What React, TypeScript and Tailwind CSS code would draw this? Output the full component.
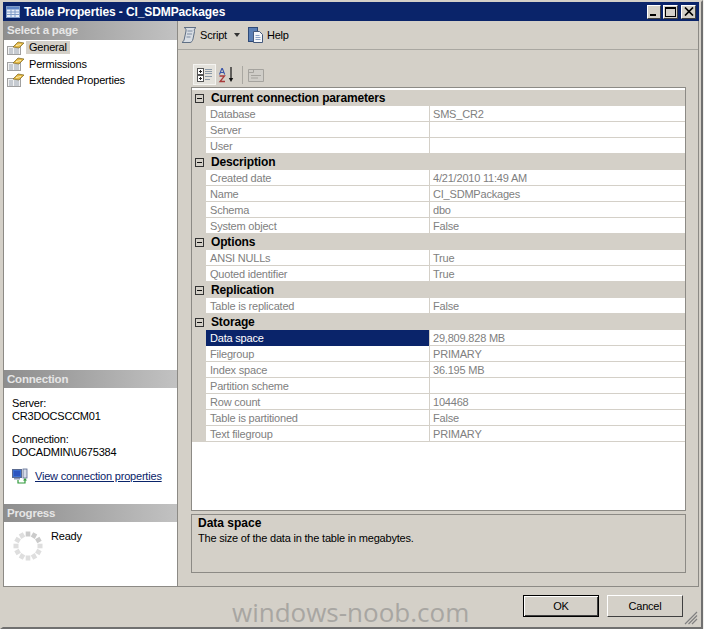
const font = "font-['Liberation_Sans',Arial,sans-serif]";
const body = "text-[11px] tracking-[-0.2px]";

type Row = { name: string; value: string; selected?: boolean };
type Section = { title: string; rows: Row[] };

const sections: Section[] = [
  {
    title: "Current connection parameters",
    rows: [
      { name: "Database", value: "SMS_CR2" },
      { name: "Server", value: "" },
      { name: "User", value: "" },
    ],
  },
  {
    title: "Description",
    rows: [
      { name: "Created date", value: "4/21/2010 11:49 AM" },
      { name: "Name", value: "CI_SDMPackages" },
      { name: "Schema", value: "dbo" },
      { name: "System object", value: "False" },
    ],
  },
  {
    title: "Options",
    rows: [
      { name: "ANSI NULLs", value: "True" },
      { name: "Quoted identifier", value: "True" },
    ],
  },
  {
    title: "Replication",
    rows: [{ name: "Table is replicated", value: "False" }],
  },
  {
    title: "Storage",
    rows: [
      { name: "Data space", value: "29,809.828 MB", selected: true },
      { name: "Filegroup", value: "PRIMARY" },
      { name: "Index space", value: "36.195 MB" },
      { name: "Partition scheme", value: "" },
      { name: "Row count", value: "104468" },
      { name: "Table is partitioned", value: "False" },
      { name: "Text filegroup", value: "PRIMARY" },
    ],
  },
];

function PageIcon() {
  return (
    <svg width="18" height="16" viewBox="0 0 18 16" className="shrink-0">
      <rect x="0.500" y="6.500" width="13" height="8" fill="#f2f2f2" stroke="#a0a0a0" />
      <path d="M2 9h4M7 9h5M2 11h4M7 11h5M2 13h4M7 13h5" stroke="#9aa4b0" />
      <path d="M6 7 L11 2 L17 3 L12 8 Z" fill="#e3b744" stroke="#7a6420" strokeWidth="0.700" />
      <path d="M9 5.500 L14 4.500" stroke="#fff2b8" />
    </svg>
  );
}

function ScriptIcon() {
  return (
    <svg width="18" height="18" viewBox="0 0 18 18">
      <path d="M4 1.500h12c-1.500 1-2 2-1.500 4L13 13c-.5 2-1.500 3.500-3 3.500H2c1.500-1 2-2 2.300-3.500L6 5C6.300 3 5.500 2 4 1.500Z" fill="#d8dde3" stroke="#5f6f84" />
      <path d="M7.500 5h5M7 8h5M6.500 11h4" stroke="#7d8ba0" />
    </svg>
  );
}

function HelpIcon() {
  return (
    <svg width="17" height="18" viewBox="0 0 17 18">
      <rect x="1.500" y="1.500" width="9" height="14" fill="#5b7fb5" stroke="#2f4a78" />
      <path d="M6.500 5.500h6l3 3v8h-9Z" fill="#f4f6fa" stroke="#44597c" />
      <path d="M8.500 9.500h4M8.500 11.500h5M8.500 13.500h5" stroke="#8ba2c4" />
    </svg>
  );
}

function CategorizedIcon() {
  return (
    <svg width="16" height="16" viewBox="0 0 16 16">
      <rect x="0.500" y="1.500" width="6" height="6" fill="#fff" stroke="#555" />
      <rect x="0.500" y="8.500" width="6" height="6" fill="#fff" stroke="#555" />
      <path d="M2 4.500h3M3.500 3v3M2 11.500h3M3.500 10v3" stroke="#222" />
      <path d="M8 2.500h7M8 4.500h7M8 6.500h7M8 9.500h7M8 12.500h5" stroke="#8c9aa8" />
    </svg>
  );
}

function SortIcon() {
  return (
    <svg width="17" height="16" viewBox="0 0 17 16">
      <path d="M1.500 7.500 3.800 1.500h.6l2.300 6M2.500 5.500h3.200" fill="none" stroke="#3a55a8" strokeWidth="1.100" />
      <path d="M1.500 9h5L2 14.500h5" fill="none" stroke="#a83a3a" strokeWidth="1.300" />
      <path d="M13 0v12" stroke="#111" strokeWidth="1.200" />
      <path d="M10.800 11h4.400L13 15Z" fill="#111" />
    </svg>
  );
}

function PagesIcon() {
  return (
    <svg width="16" height="16" viewBox="0 0 16 16">
      <path d="M0.500 2.500h15v12h-15Z" fill="#cfcdc8" stroke="#a5a39e" />
      <path d="M0.500 5.500h5v-3M3 8.500h10M3 11h7" fill="none" stroke="#a5a39e" />
    </svg>
  );
}

function ConnectionIcon() {
  return (
    <svg width="17" height="17" viewBox="0 0 17 17" className="shrink-0">
      <rect x="0.500" y="1.500" width="9" height="8" fill="#3b6fd0" stroke="#5a6a90" />
      <rect x="2" y="3" width="6" height="5" fill="#2c55c0" />
      <rect x="2" y="10" width="6" height="1.500" fill="#8a98b8" />
      <rect x="11" y="1" width="4" height="9" fill="#d5dbe8" stroke="#5a6a90" strokeWidth="0.800" />
      <path d="M6 12v3h7v-4" fill="none" stroke="#2f9a3a" strokeWidth="1.200" />
      <path d="M11 12.500 13 10l2 2.500Z" fill="#2f9a3a" />
    </svg>
  );
}

function Spinner() {
  const dots = Array.from({ length: 12 }, (_, i) => (i * 360) / 12);
  return (
    <svg width="30" height="30" viewBox="0 0 30 30" className="mt-[1px] shrink-0">
      {dots.map((deg, i) => (
        <rect
          key={deg}
          x="12.700"
          y="0.500"
          width="4.600"
          height="5"
          fill={i < 3 ? "#cbcbcb" : "#dedede"}
          transform={`rotate(${deg} 15 15)`}
        />
      ))}
    </svg>
  );
}

function PanelHeading({ text, tall }: { text: string; tall?: boolean }) {
  return (
    <div
      className={
        tall
          ? "h-[19px] bg-gradient-to-r from-[#8e8e8e] to-[#c2c2c2] pl-[3px] text-[11.5px] leading-[19px] font-bold text-[#e6e6e6]"
          : "h-[18px] bg-gradient-to-r from-[#8e8e8e] to-[#c2c2c2] pl-[3px] text-[11.5px] leading-[18px] font-bold text-[#e6e6e6]"
      }
    >
      {text}
    </div>
  );
}

function CaptionButton({ children, wide }: { children: React.ReactNode; wide?: boolean }) {
  return (
    <div
      className={
        wide
          ? "flex h-[14px] w-[15px] items-center justify-center border-t border-l border-t-white border-l-white border-r border-b border-r-[#404040] border-b-[#404040] bg-[#d4d0c8]"
          : "flex h-[14px] w-[14px] items-center justify-center border-t border-l border-t-white border-l-white border-r border-b border-r-[#404040] border-b-[#404040] bg-[#d4d0c8]"
      }
    >
      {children}
    </div>
  );
}

function Expander() {
  return (
    <div className="flex h-[9px] w-[9px] items-center justify-center border border-[#333] bg-[#d4d0c8]">
      <div className="h-px w-[5px] bg-[#111]" />
    </div>
  );
}

function PropertyGrid() {
  return (
    <div className="flex h-[424px] shrink-0 flex-col border border-[#8c8a85] bg-white pt-[2px]">
      {sections.map((section) => (
        <div key={section.title}>
          <div className="flex h-4 items-center bg-[#d4d0c8]">
            <div className="flex w-[14px] justify-center">
              <Expander />
            </div>
            <div className="pl-[5px] text-[12px] font-bold tracking-[-0.15px] text-black">{section.title}</div>
          </div>
          {section.rows.map((row) => (
            <div key={row.name} className={`flex h-4 leading-[16px] ${body}`}>
              <div className="w-[14px] shrink-0 bg-[#d4d0c8]" />
              <div
                className={
                  row.selected
                    ? "w-[223px] shrink-0 bg-[#0a246a] pl-[4px] text-white"
                    : "w-[223px] shrink-0 border-b border-[#d4d0c8] pl-[4px] text-[#808080]"
                }
              >
                {row.name}
              </div>
              <div className="flex-1 border-b border-l border-[#d4d0c8] pl-[3px] text-[#808080]">
                {row.value}
              </div>
            </div>
          ))}
        </div>
      ))}
    </div>
  );
}

export default function App() {
  return (
    <div className={`${font} h-[629px] w-[704px] overflow-hidden bg-[#f0efec] text-black`}>
      <div className="relative flex h-[629px] w-[703px] flex-col border-t-2 border-r-2 border-b-2 border-l-[3px] border-t-[#d4d0c8] border-r-[#707070] border-b-[#707070] border-l-[#d4d0c8] bg-[#d4d0c8]">
        {/* title bar */}
        <div className="mr-[2px] flex h-[19px] shrink-0 items-center bg-[#0a246a] pr-[3px] pl-[3px]">
          <svg width="14" height="14" viewBox="0 0 14 14">
            <rect x="0.500" y="1.500" width="13" height="11" fill="#e8eef8" stroke="#7f9cc8" />
            <rect x="1" y="2" width="12" height="2.500" fill="#5f86c8" />
            <path d="M1 7h12M1 9.500h12M5 4.500v8M9 4.500v8" stroke="#7f9cc8" />
          </svg>
          <div className="ml-[4px] flex-1 text-[12px] font-bold tracking-[-0.1px] text-white">
            Table Properties - CI_SDMPackages
          </div>
          <div className="flex">
            <CaptionButton>
              <div className="mt-[7px] mr-[2px] h-[2px] w-[6px] bg-black" />
            </CaptionButton>
            <div className="ml-[2px]">
              <CaptionButton wide>
                <div className="h-[10px] w-[11px] border border-t-2 border-black" />
              </CaptionButton>
            </div>
            <div className="ml-[3px]">
              <CaptionButton wide>
                <svg width="10" height="9" viewBox="0 0 10 9">
                  <path d="M1 0.500 9 8.500M9 0.500 1 8.500" stroke="#000" strokeWidth="1.700" />
                </svg>
              </CaptionButton>
            </div>
          </div>
        </div>

        {/* body */}
        <div className={`mr-[2px] flex h-[566px] shrink-0 border-r border-b border-[#8c8a85] ${body}`}>
          {/* left */}
          <div className="flex w-[175px] shrink-0 flex-col border-x border-[#8c8a85] bg-white">
            <PanelHeading text="Select a page" tall />
            <div className="flex h-[330px] flex-col">
              <div className="flex h-4 items-center pl-[3px]">
                <PageIcon />
                <div className="mt-[-2px] ml-px bg-[#d4d0c8] pr-[3px] pl-[3px] leading-[13px]">General</div>
              </div>
              <div className="flex h-4 items-center pl-[3px]">
                <PageIcon />
                <div className="ml-[4px] leading-4">Permissions</div>
              </div>
              <div className="flex h-4 items-center pl-[3px]">
                <PageIcon />
                <div className="ml-[4px] leading-4">Extended Properties</div>
              </div>
            </div>
            <PanelHeading text="Connection" />
            <div className="flex h-[116px] flex-col pt-[9px] pl-[8px] leading-[13px]">
              <div>Server:</div>
              <div>CR3DOCSCCM01</div>
              <div className="mt-[10px]">Connection:</div>
              <div>DOCADMIN\U675384</div>
              <div className="mt-[9px] flex items-center">
                <ConnectionIcon />
                <div className="ml-[6px] whitespace-nowrap text-[#0a246a] underline">View connection properties</div>
              </div>
            </div>
            <PanelHeading text="Progress" />
            <div className="flex flex-1 items-start pt-[8px] pl-[9px]">
              <Spinner />
              <div className="ml-[8px] leading-[13px]">Ready</div>
            </div>
          </div>

          {/* right */}
          <div className="flex flex-1 flex-col">
            {/* script toolbar */}
            <div className="flex h-[29px] shrink-0 items-center border-b border-[#a9a7a1] pl-[2px]">
              <ScriptIcon />
              <div className="ml-[2px]">Script</div>
              <svg width="6" height="4" viewBox="0 0 6 4" className="ml-[7px]">
                <path d="M0 0h6L3 4Z" fill="#333" />
              </svg>
              <div className="ml-[7px]">
                <HelpIcon />
              </div>
              <div className="ml-[3px]">Help</div>
            </div>

            <div className="flex flex-1 flex-col pt-[14px] pr-[12px] pl-[13px]">
              {/* grid toolbar */}
              <div className="flex h-[23px] shrink-0 items-start pl-[2px]">
                <div className="flex h-[21px] w-[23px] items-center justify-center border border-[#f4f3f0] bg-[#e4e2dc]">
                  <CategorizedIcon />
                </div>
                <div className="mt-[3px] ml-[2px]">
                  <SortIcon />
                </div>
                <div className="mt-[2px] ml-[7px] h-[18px] w-px bg-[#a9a7a1]" />
                <div className="mt-[3px] ml-[5px]">
                  <PagesIcon />
                </div>
              </div>

              <PropertyGrid />

              {/* help box */}
              <div className="mt-[3px] h-[59px] border border-[#8c8a85] pt-px pl-[6px] leading-[15px]">
                <div className="text-[12px] font-bold tracking-normal">Data space</div>
                <div>The size of the data in the table in megabytes.</div>
              </div>
            </div>
          </div>
        </div>

        {/* footer */}
        <div className={`flex flex-1 items-start justify-end pt-[8px] pr-[18px] ${body}`}>
          <div className="flex h-[22px] w-[76px] items-center justify-center border border-black bg-[#d4d0c8] shadow-[inset_1px_1px_0_#fff,inset_-1px_-1px_0_#404040]">
            OK
          </div>
          <div className="ml-[8px] flex h-[22px] w-[76px] items-center justify-center border-t border-l border-t-white border-l-white border-r border-b border-r-[#404040] border-b-[#404040] bg-[#d4d0c8]">
            Cancel
          </div>
        </div>

        {/* watermark + size grip lie over the footer */}
        <div className="absolute top-[595px] left-[229px] font-['Open_Sans',sans-serif] text-[26px] leading-[30px] text-[#a8a6a2]">
          windows-noob.com
        </div>
        <svg width="14" height="14" viewBox="0 0 14 14" className="absolute right-[3px] bottom-[2px]">
          <path d="M13 1 1 13M13 4.500 4.500 13M13 8 8 13" stroke="#808080" strokeWidth="1.200" />
        </svg>
      </div>
    </div>
  );
}
